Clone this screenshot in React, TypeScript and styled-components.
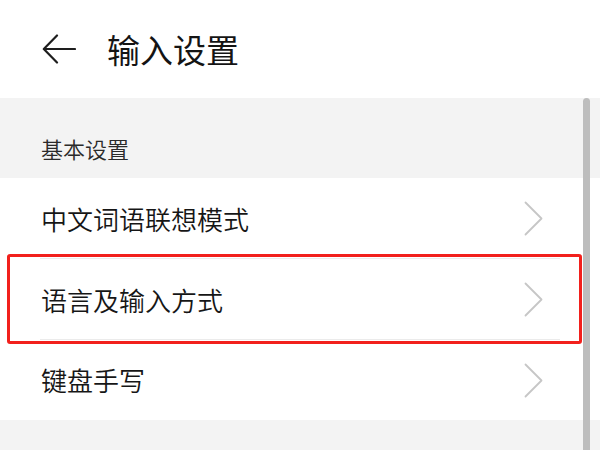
import React from "react";
import styled, { createGlobalStyle } from "styled-components";

const Global = createGlobalStyle`
  html, body { margin: 0; padding: 0; background: #ffffff; }
  body { font-family: "Noto Sans CJK SC", "Noto Sans", sans-serif; }
  * { box-sizing: border-box; }
`;

const Page = styled.div`
  position: relative;
  width: 600px;
  height: 450px;
  overflow: hidden;
  background: #f3f3f3;
  display: flex;
  flex-direction: column;
`;

const Header = styled.header`
  height: 98px;
  flex: none;
  background: #ffffff;
  display: flex;
  align-items: center;
  padding-left: 42px;
  gap: 31px;
`;

const BackButton = styled.button`
  border: none;
  background: transparent;
  padding: 0;
  width: 34px;
  height: 30px;
  display: flex;
  align-items: center;
  justify-content: center;
  cursor: pointer;
`;

const Title = styled.h1`
  margin: 0;
  font-size: 33px;
  font-weight: 400;
  line-height: 40px;
  color: #141414;
`;

const SectionHeader = styled.div`
  height: 80px;
  flex: none;
  display: flex;
  align-items: flex-end;
  padding: 0 0 15px 41px;
  font-size: 22px;
  font-weight: 350;
  line-height: 30px;
  color: #2a2a2a;
`;

const List = styled.ul`
  margin: 0;
  padding: 0;
  list-style: none;
  background: #ffffff;
  flex: none;
`;

const Row = styled.li<{ $last?: boolean }>`
  position: relative;
  height: ${(p) => (p.$last ? "80px" : "81px")};
  display: flex;
  align-items: center;
  justify-content: space-between;
  padding: 0 57px 0 41px;
  font-size: 26px;
  font-weight: 350;
  line-height: 34px;
  color: #161616;
  &::after {
    content: "";
    display: ${(p) => (p.$last ? "none" : "block")};
    position: absolute;
    left: 40px;
    right: 40px;
    bottom: 0;
    height: 1px;
    background: #ebebeb;
  }
`;

const Label = styled.span``;

const Highlight = styled.div`
  position: absolute;
  left: 7px;
  right: 18px;
  top: -5px;
  bottom: -4px;
  border: 3px solid #f2201c;
  border-radius: 3px;
  pointer-events: none;
  z-index: 2;
`;

const Scrollbar = styled.div`
  position: absolute;
  left: 583px;
  top: 98px;
  width: 7px;
  bottom: -10px;
  background: #bdbdbd;
  border-radius: 4px;
  z-index: 3;
`;

const BackArrow = () => (
  <svg width="34" height="30" viewBox="0 0 34 30" fill="none">
    <path d="M33 15H2.5" stroke="#1e1e1e" strokeWidth="2.2" strokeLinecap="round" />
    <path d="M15 1.5L1.8 15L15 28.5" stroke="#1e1e1e" strokeWidth="2.2" strokeLinecap="round" strokeLinejoin="round" />
  </svg>
);

const Chevron = () => (
  <svg width="19" height="35" viewBox="0 0 19 35" fill="none">
    <path d="M1.5 1.5L17.5 17.5L1.5 33.5" stroke="#c6c6c6" strokeWidth="1.8" strokeLinecap="round" strokeLinejoin="round" />
  </svg>
);

const items = ["中文词语联想模式", "语言及输入方式", "键盘手写"];

export default function App() {
  return (
    <>
      <Global />
      <Page>
        <Header>
          <BackButton aria-label="返回">
            <BackArrow />
          </BackButton>
          <Title>输入设置</Title>
        </Header>
        <SectionHeader>基本设置</SectionHeader>
        <List>
          {items.map((text, i) => (
            <Row key={text} $last={i === items.length - 1}>
              <Label>{text}</Label>
              <Chevron />
              {i === 1 && <Highlight />}
            </Row>
          ))}
        </List>
        <Scrollbar />
      </Page>
    </>
  );
}
